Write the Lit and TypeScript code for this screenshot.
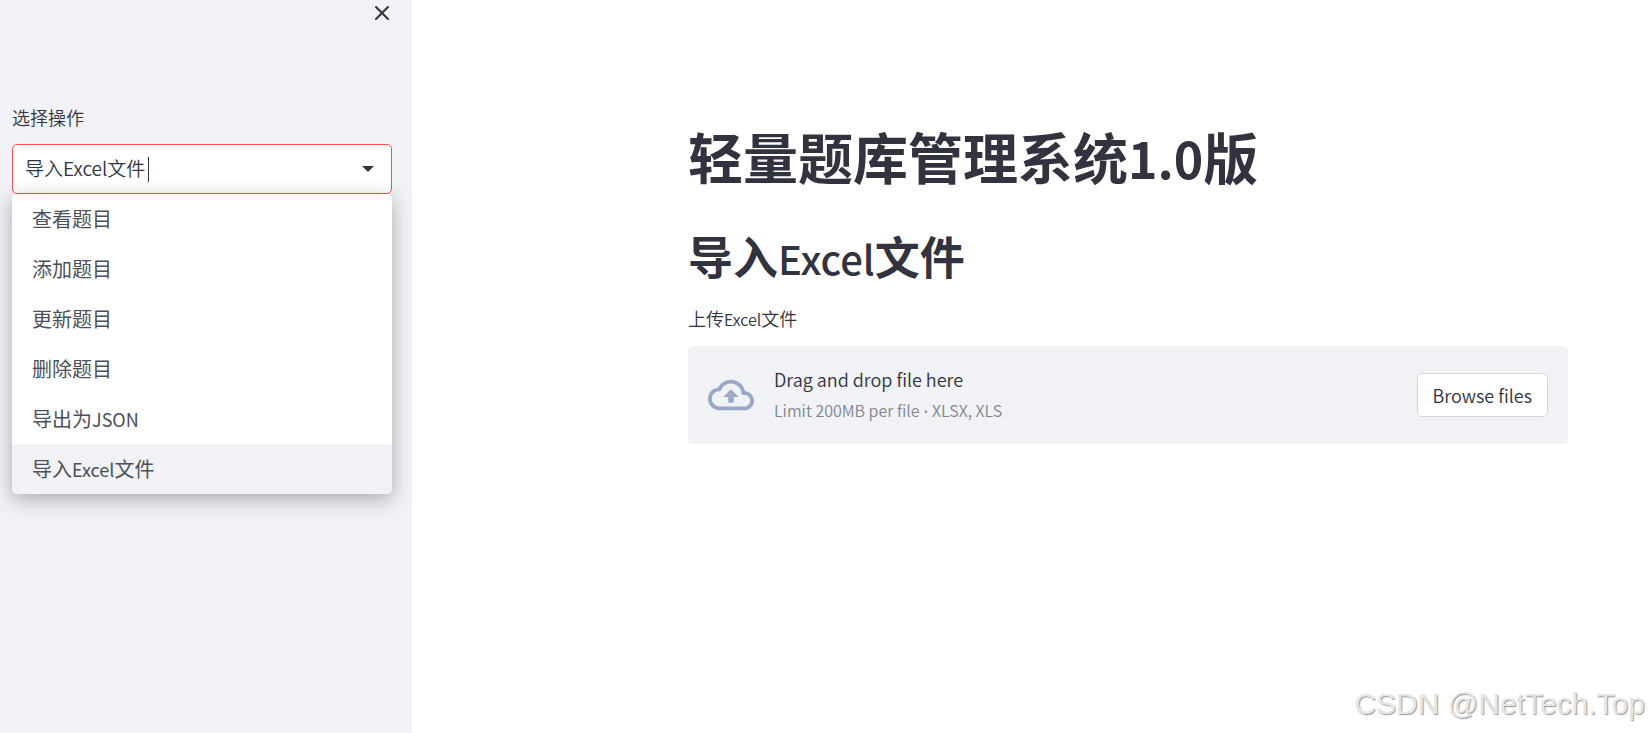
import { LitElement, html, css } from "lit";
import { customElement, state } from "lit/decorators.js";

@customElement("operation-select")
class OperationSelect extends LitElement {
  static styles = css`
    :host { display: block; position: relative; }
    * { box-sizing: border-box; }
    .label { display: block; font-size: 18px; line-height: 32px; margin-bottom: 11px; font-weight: 350; }
    .control {
      display: flex; align-items: center; height: 50px; padding: 0 17px 0 12px;
      background: #fff; border: 1px solid #ff4b4b; border-radius: 5px;
    }
    .value {
      field-sizing: content; min-width: 0; border: 0; padding: 0 0 2px; outline: 0; background: none;
      color: inherit; font: inherit; font-size: 19px; line-height: 28px; font-weight: 350; caret-color: transparent;
    }
    .caret { flex: none; width: 1px; height: 25px; margin-left: 3px; background: #31333f; }
    .arrow { flex: none; margin-left: auto; width: 12px; height: 6px; fill: #31333f; }
    .menu {
      position: absolute; top: 100%; left: 0; right: 0; margin: 0; padding: 0; list-style: none;
      background: #fff; border-radius: 5px; overflow: hidden;
      box-shadow: 0 5px 20px rgba(0, 0, 0, 0.3);
    }
    .option { height: 50px; padding: 0 20px; font-size: 20px; line-height: 50px; color: #4d4f5a; cursor: pointer; }
    .option.selected { background: #f0f2f6; }
    .latin { font-size: 18px; }
  `;

  @state() private value = "导入Excel文件";

  private options = [
    ["查看题目", ""], ["添加题目", ""], ["更新题目", ""], ["删除题目", ""],
    ["导出为", "JSON", ""], ["导入", "Excel", "文件"],
  ];

  render() {
    return html`
      <label class="label" for="operation">选择操作</label>
      <div class="control">
        <input class="value" id="operation" role="combobox" aria-expanded="true" aria-controls="operations"
          autocomplete="off" .value=${this.value} />
        <span class="caret"></span>
        <svg class="arrow" viewBox="0 0 12 6" aria-hidden="true"><path d="M0 0h12L6 6z" /></svg>
      </div>
      <ul class="menu" id="operations" role="listbox">
        ${this.options.map(([head, latin, tail]) => {
          const text = head + latin + (tail ?? "");
          const selected = text === this.value;
          return html`<li class="option ${selected ? "selected" : ""}" role="option" aria-selected=${selected}
            @click=${() => (this.value = text)}>${head}${latin ? html`<span class="latin">${latin}</span>` : ""}${tail ?? ""}</li>`;
        })}
      </ul>
    `;
  }
}

@customElement("file-uploader")
class FileUploader extends LitElement {
  static styles = css`
    :host { display: block; font-weight: 350; }
    * { box-sizing: border-box; }
    .label { display: block; font-size: 18px; line-height: 32px; margin-bottom: 11px; }
    .latin { font-size: 16px; }
    .dropzone { display: flex; align-items: center; min-height: 98px; padding: 0 20px; background: #f0f2f6; border-radius: 5px; }
    .cloud { flex: none; width: 46px; height: 46px; margin-right: 20px; fill: #98a8c6; }
    .text { flex: 1; min-width: 0; }
    .title { font-size: 18px; line-height: 32px; }
    .hint { font-size: 16px; line-height: 30px; color: #83858e; }
    .dot { font-family: "Open Sans", sans-serif; font-size: 14px; }
    .browse {
      height: 44px; padding: 0 15px; border: 1px solid #d6d6d9; border-radius: 5px; background: #fff;
      color: inherit; font: inherit; font-size: 18px; line-height: 32px; cursor: pointer;
    }
  `;

  private browse() {
    (this.renderRoot.querySelector("#file") as HTMLInputElement).click();
  }

  render() {
    return html`
      <label class="label" for="file">上传<span class="latin">Excel</span>文件</label>
      <div class="dropzone">
        <input id="file" type="file" accept=".xlsx,.xls" hidden />
        <svg class="cloud" viewBox="0 0 24 24" aria-hidden="true">
          <path d="M19.35 10.04C18.67 6.59 15.64 4 12 4 9.11 4 6.6 5.64 5.35 8.04 2.34 8.36 0 10.91 0 14c0 3.31 2.69 6 6 6h13c2.76 0 5-2.24 5-5 0-2.64-2.05-4.78-4.65-4.96zM19 18H6c-2.21 0-4-1.79-4-4 0-2.05 1.53-3.76 3.56-3.97l1.07-.11.5-.95C8.08 7.14 9.94 6 12 6c2.62 0 4.88 1.86 5.39 4.43l.3 1.5 1.53.11c1.56.1 2.78 1.41 2.78 2.96 0 1.65-1.35 3-3 3zM8 13h2.55v3h2.9v-3H16l-4-4z" />
        </svg>
        <div class="text">
          <div class="title">Drag and drop file here</div>
          <div class="hint">Limit 200MB per file<span class="dot"> • </span>XLSX, XLS</div>
        </div>
        <button class="browse" type="button" @click=${this.browse}>Browse files</button>
      </div>
    `;
  }
}

@customElement("app-root")
class AppRoot extends LitElement {
  static styles = css`
    :host {
      display: grid; grid-template-columns: 412px 1fr; position: relative; min-height: 100vh;
      background: #fff; color: #31333f; font-family: "Noto Sans CJK SC", sans-serif;
    }
    * { box-sizing: border-box; }
    .sidebar { background: #f0f2f6; padding: 0 20px 0 12px; }
    .top { display: flex; justify-content: flex-end; height: 101px; }
    .close { width: 20px; height: 28px; padding: 0 0 2px; border: 0; background: none; cursor: pointer; }
    .close svg { display: block; width: 20px; height: 20px; fill: none; stroke: #31333f; stroke-width: 2; stroke-linecap: round; }
    .main { padding: 116px 80px 80px; }
    .content { max-width: 880px; margin-left: auto; }
    h1, h2 { margin: 0; font-weight: 700; }
    h1 { font-size: 55px; line-height: 78px; }
    h1 .latin { font-size: 50px; }
    h2 { font-size: 45px; line-height: 60px; margin: 30px 0 14px; }
    h2 .latin { font-size: 40px; font-weight: 500; }
    .watermark {
      position: absolute; right: 3px; bottom: 11px; font-family: "Liberation Sans", sans-serif;
      font-size: 30px; line-height: 36px; color: #e6e6e6; text-shadow: 1px 1px 1px #999;
    }
  `;

  render() {
    return html`
      <aside class="sidebar">
        <div class="top">
          <button class="close" type="button" aria-label="Close">
            <svg viewBox="0 0 20 20"><path d="M4 4l12 12M16 4L4 16" /></svg>
          </button>
        </div>
        <operation-select></operation-select>
      </aside>
      <main class="main">
        <div class="content">
          <h1>轻量题库管理系统<span class="latin">1.0</span>版</h1>
          <h2>导入<span class="latin">Excel</span>文件</h2>
          <file-uploader></file-uploader>
        </div>
      </main>
      <div class="watermark">CSDN @NetTech.Top</div>
    `;
  }
}
